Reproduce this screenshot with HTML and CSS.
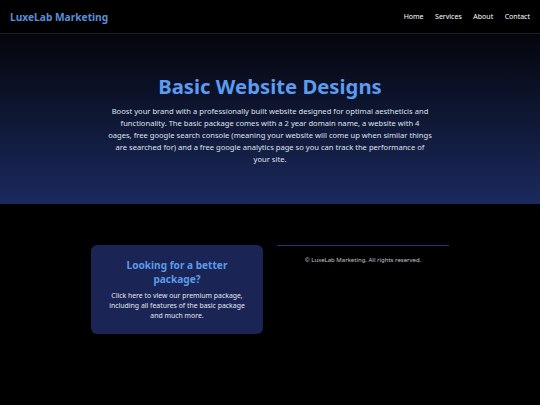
FILE: index.html
```html
<!DOCTYPE html>
<html lang="en">
<head>
<meta charset="utf-8">
<title>LuxeLab Marketing</title>
<link rel="stylesheet" href="styles.css">
</head>
<body>
<header class="site-header">
  <div class="logo">LuxeLab Marketing</div>
  <nav class="nav">
    <a href="#">Home</a>
    <a href="#">Services</a>
    <a href="#">About</a>
    <a href="#">Contact</a>
  </nav>
</header>
<section class="hero">
  <h1 class="hero-title">Basic Website Designs</h1>
  <p class="hero-text">Boost your brand with a professionally built website designed for optimal aestheticis and<br>functionality. The basic package comes with a 2 year domain name, a website with 4<br>oages, free google search console (meaning your website will come up when similar things<br>are searched for) and a free google analytics page so you can track the performance of<br>your site.</p>
</section>
<main class="content">
  <a class="card" href="#">
    <h2 class="card-title">Looking for a better package?</h2>
    <p class="card-text">Click here to view our premium package, including all features of the basic package and much more.</p>
  </a>
  <footer class="footer">
    <p>© LuxeLab Marketing. All rights reserved.</p>
  </footer>
</main>
</body>
</html>
```
FILE: styles.css
```css
* { box-sizing: border-box; }
html, body { margin: 0; padding: 0; }
body {
  background: #000;
  color: #fff;
  font-family: "Noto Sans", "Open Sans", sans-serif;
  width: 540px;
  height: 405px;
  overflow: hidden;
}
.site-header {
  height: 34px;
  display: flex;
  align-items: center;
  justify-content: space-between;
  padding: 0 10px 0 10px;
  border-bottom: 1px solid #1a1f30;
}
.logo {
  font-size: 10.2px;
  font-weight: 700;
  color: #5a8ed8;
}
.nav {
  display: flex;
  gap: 11.5px;
}
.nav a {
  color: #fff;
  text-decoration: none;
  font-size: 7px;
}
.hero {
  height: 170px;
  background: linear-gradient(to bottom, #04050c 0%, #1b2a5e 100%);
  text-align: center;
  padding-top: 38px;
}
.hero-title {
  margin: 0;
  font-size: 20.3px;
  font-weight: 700;
  color: #5b9bf0;
  line-height: 28px;
}
.hero-text {
  margin: 5px auto 0;
  width: 350px;
  font-size: 7.6px;
  line-height: 12px;
  color: #dfe2ea;
}
.content {
  width: 358px;
  margin: 41px auto 0;
  display: grid;
  grid-template-columns: 172px 172px;
  gap: 14px;
  align-items: start;
}
.card {
  display: block;
  background: #1a2556;
  border-radius: 6px;
  height: 89px;
  padding: 13px 16px;
  text-align: center;
  text-decoration: none;
}
.card-title {
  margin: 0;
  font-size: 10.1px;
  font-weight: 700;
  line-height: 14px;
  color: #5b9be8;
}
.card-text {
  margin: 5px 0 0;
  font-size: 6.9px;
  line-height: 10px;
  color: #e3e6ef;
}
.footer {
  border-top: 1px solid #2a3470;
  text-align: center;
  padding-top: 9px;
}
.footer p {
  margin: 0;
  font-size: 6px;
  line-height: 10px;
  color: #c4c7cf;
}
```
